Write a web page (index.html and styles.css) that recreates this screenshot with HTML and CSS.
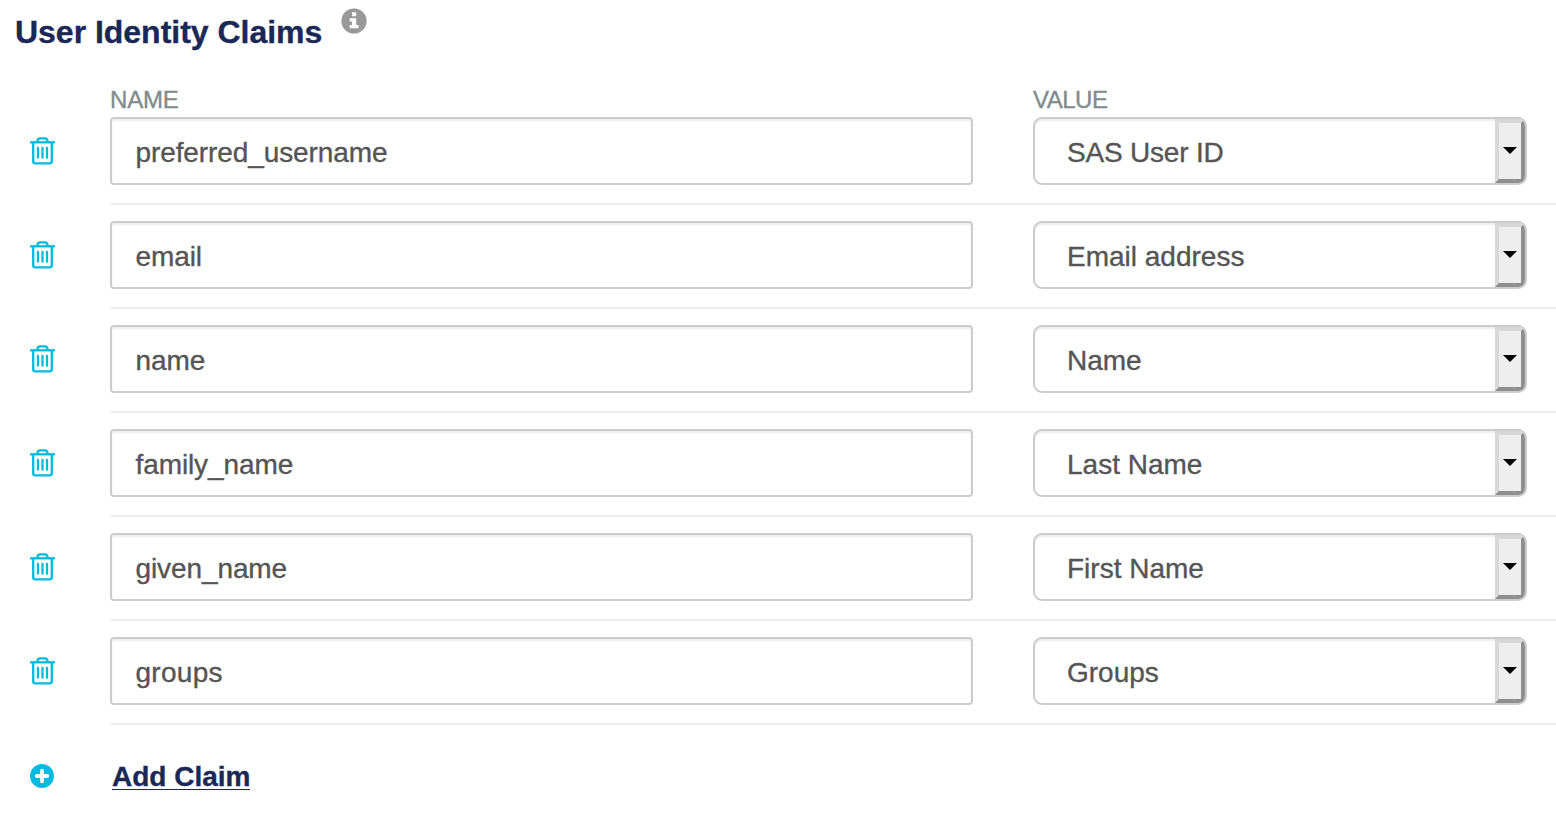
FILE: index.html
```html
<!DOCTYPE html>
<html lang="en">
<head>
<meta charset="utf-8">
<title>User Identity Claims</title>
<link rel="stylesheet" href="styles.css">
</head>
<body>
<svg class="defs" width="0" height="0">
  <symbol id="trash" viewBox="0 0 26 28">
    <g fill="none" stroke="currentColor" stroke-width="2.300">
      <path d="M0 5.300H25"/>
      <path d="M7.500 5V4Q7.500 1.300 10.200 1.300H14.800Q17.500 1.300 17.500 4V5"/>
      <path d="M3.200 5.300V24.300Q3.200 26.300 5.200 26.300H19.800Q21.800 26.300 21.800 24.300V5.300"/>
      <path d="M8 11V20.700M12.500 11V20.700M17 11V20.700" stroke-linecap="round"/>
    </g>
  </symbol>
</svg>
<main class="claims">
  <header class="head">
    <h1 class="title">User Identity Claims</h1>
    <svg class="info" viewBox="0 0 26 26"><circle cx="13" cy="13" r="12.600" fill="#999"/><path fill="#fff" d="M11 4.300h4.200v4H11zM8.700 10.200h6.500v6.800h2.300v3.200H8.700V17H11v-3.600H8.700z"/></svg>
  </header>
  <div class="labels"><span>NAME</span><span class="value-label">VALUE</span></div>
  <div class="row"><svg class="trash"><use href="#trash"/></svg><div class="fields"><div class="input">preferred_username</div><div class="select"><span class="tight">SAS User ID</span><i class="arrow"></i></div></div></div>
  <div class="row"><svg class="trash"><use href="#trash"/></svg><div class="fields"><div class="input">email</div><div class="select"><span>Email address</span><i class="arrow"></i></div></div></div>
  <div class="row"><svg class="trash"><use href="#trash"/></svg><div class="fields"><div class="input">name</div><div class="select"><span>Name</span><i class="arrow"></i></div></div></div>
  <div class="row"><svg class="trash"><use href="#trash"/></svg><div class="fields"><div class="input">family_name</div><div class="select"><span>Last Name</span><i class="arrow"></i></div></div></div>
  <div class="row"><svg class="trash"><use href="#trash"/></svg><div class="fields"><div class="input">given_name</div><div class="select"><span>First Name</span><i class="arrow"></i></div></div></div>
  <div class="row"><svg class="trash"><use href="#trash"/></svg><div class="fields"><div class="input loose">groups</div><div class="select"><span>Groups</span><i class="arrow"></i></div></div></div>
  <div class="add">
    <svg class="plus" viewBox="0 0 24 24"><circle cx="12" cy="12" r="12" fill="#00bbdf"/><path d="M12 6.700V17.300M6.700 12H17.300" stroke="#fff" stroke-width="3.800" stroke-linecap="round"/></svg>
    <a class="add-link">Add Claim</a>
  </div>
</main>
</body>
</html>
```
FILE: styles.css
```css
* { box-sizing: border-box; }
body {
  margin: 0;
  background: #fff;
  color: #555;
  font: 28px/32px "Liberation Sans", Arial, Helvetica, sans-serif;
  -webkit-text-stroke: 0.35px currentColor;
  overflow: hidden;
}
.defs { display: block; }
.head {
  display: flex;
  height: 85px;
  padding: 8px 0 0 15px;
}
.title {
  margin: 6px 0 0;
  width: 326px;
  color: #1a2856;
  font-size: 32px;
  line-height: 36px;
  letter-spacing: -0.02px;
  white-space: nowrap;
}
.info { width: 26px; height: 26px; }
.labels {
  display: grid;
  grid-template-columns: 923px 1fr;
  height: 32px;
  padding-left: 110px;
  color: #7f8c8d;
  font-size: 24px;
  line-height: 29px;
  letter-spacing: -0.2px;
}
.value-label { letter-spacing: -0.5px; }
.row { display: flex; height: 104px; }
.trash {
  width: 26px;
  height: 28px;
  margin: 20px 54px 0 30px;
  color: #00bbdf;
}
.fields {
  display: flex;
  gap: 60px;
  flex: 1;
  height: 88px;
  border-bottom: 2px solid #eee;
}
.input, .select {
  height: 68px;
  border: 2px solid #ccc;
  box-shadow: inset 0 2px 2px rgba(0, 0, 0, .075);
  line-height: 67px;
}
.input {
  width: 863px;
  padding-left: 23.5px;
  border-radius: 4px;
  letter-spacing: -0.1px;
}
.loose { letter-spacing: 0.3px; }
.tight { letter-spacing: -0.2px; }
.select {
  display: flex;
  justify-content: space-between;
  width: 494px;
  padding-left: 32px;
  border-radius: 9px;
  overflow: hidden;
}
.arrow {
  display: flex;
  align-items: center;
  justify-content: center;
  width: 30px;
  padding-bottom: 2px;
  border: 4px solid;
  border-color: #d8d8d8 #8f8f8f #8f8f8f #d8d8d8;
  background: #eee;
}
.arrow::before {
  content: "";
  border: solid transparent;
  border-width: 7px 7px 0;
  border-top-color: #000;
}
.add {
  display: flex;
  height: 60px;
  padding: 23px 0 0 30px;
}
.plus {
  width: 24px;
  height: 24px;
  margin-right: 58px;
}
.add-link {
  height: 26px;
  border-bottom: 1px solid #1a2856;
  color: #1a2856;
  font-weight: bold;
  line-height: 26px;
}
```
